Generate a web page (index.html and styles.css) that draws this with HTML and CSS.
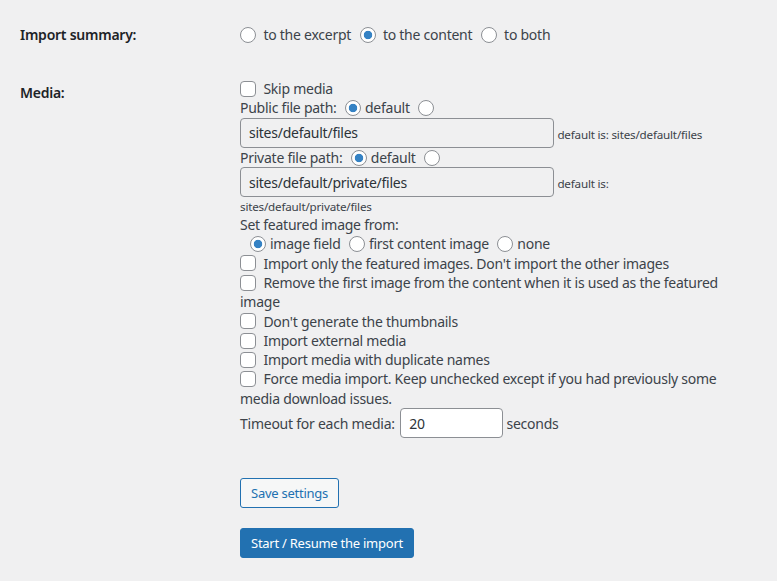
FILE: index.html
```html
<!DOCTYPE html>
<html lang="en">
<head>
<meta charset="utf-8">
<title>Import settings</title>
<link rel="stylesheet" href="styles.css">
</head>
<body>
<div class="wrap">
  <table class="form-table">
    <tr>
      <th>Import summary:</th>
      <td>
        <label class="opt"><input type="radio" name="summary"> to the excerpt</label>
        <label class="opt"><input type="radio" name="summary" checked> to the content</label>
        <label class="opt"><input type="radio" name="summary"> to both</label>
      </td>
    </tr>
    <tr>
      <th>Media:</th>
      <td class="media">
        <div class="line"><label><input type="checkbox"> Skip media</label></div>
        <div class="line">Public file path: <label class="opt"><input type="radio" name="pub" class="first" checked>default</label> <input type="radio" name="pub"></div>
        <div class="pathrow"><input type="text" class="path" value="sites/default/files" readonly> <small class="hint">default is: sites/default/files</small></div>
        <div class="line">Private file path: <label class="opt"><input type="radio" name="priv" class="first" checked>default</label> <input type="radio" name="priv"></div>
        <div class="pathrow"><input type="text" class="path" value="sites/default/private/files" readonly> <small class="hint">default is: sites/default/private/files</small></div>
        <div class="line">Set featured image from:</div>
        <div class="line indent"><label class="opt"><input type="radio" name="feat" checked>image field</label> <label class="opt"><input type="radio" name="feat">first content image</label> <label class="opt"><input type="radio" name="feat">none</label></div>
        <div class="line"><label><input type="checkbox"> Import only the featured images. Don't import the other images</label></div>
        <div class="line"><label><input type="checkbox"> Remove the first image from the content when it is used as the featured image</label></div>
        <div class="line"><label><input type="checkbox"> Don't generate the thumbnails</label></div>
        <div class="line"><label><input type="checkbox"> Import external media</label></div>
        <div class="line"><label><input type="checkbox"> Import media with duplicate names</label></div>
        <div class="line"><label><input type="checkbox"> Force media import. Keep unchecked except if you had previously some media download issues.</label></div>
        <div class="line">Timeout for each media: <input type="text" class="num" value="20"> seconds</div>
      </td>
    </tr>
  </table>
  <div class="actions">
    <button type="button" class="button">Save settings</button>
    <button type="button" class="button button-primary">Start / Resume the import</button>
  </div>
</div>
</body>
</html>
```
FILE: styles.css
```css
html, body {
  margin: 0;
  background: #f0f0f1;
}
body {
  color: #3c434a;
  font-family: "Noto Sans", "Open Sans", sans-serif;
  font-size: 14px;
  line-height: 1.38;
  letter-spacing: -0.25px;
}
.wrap {
  padding: 6px 20px 0 20px;
}
.form-table {
  border-collapse: collapse;
  width: 100%;
}
.form-table th {
  width: 200px;
  padding: 20px 10px 20px 0;
  text-align: left;
  vertical-align: top;
  font-weight: 600;
  color: #1d2327;
  line-height: 1.3;
}
.form-table td {
  padding: 15px 10px;
  vertical-align: middle;
  line-height: 19.3px;
}
.opt {
  margin-right: 5px;
}
input[type=radio],
input[type=checkbox] {
  appearance: none;
  -webkit-appearance: none;
  box-sizing: border-box;
  width: 16px;
  height: 16px;
  margin: -3px 4px 0 0;
  padding: 0;
  border: 1px solid #8c8f94;
  background: #fff;
  vertical-align: middle;
}
input[type=checkbox] {
  border-radius: 4px;
}
input[type=radio] {
  border-radius: 50%;
}
input[type=radio]:checked {
  background: radial-gradient(circle, #3582c4 0, #3582c4 3.8px, #fff 4.6px);
}
input.first {
  margin-left: 5px;
}
.indent {
  padding-left: 10px;
}
.pathrow {
  max-width: 500px;
  line-height: 17px;
}
.path,
.num {
  box-sizing: border-box;
  height: 30px;
  padding: 0 8px;
  border: 1px solid #8c8f94;
  border-radius: 4px;
  font-family: inherit;
  font-size: 14px;
  letter-spacing: -0.25px;
  color: #2c3338;
  vertical-align: baseline;
}
.path {
  width: 314px;
  background: #f0f0f1;
}
.num {
  width: 103px;
  margin-left: 2px;
  background: #fff;
}
.hint {
  font-size: 11.67px;
  letter-spacing: -0.2px;
}
.actions {
  display: flex;
  flex-direction: column;
  align-items: flex-start;
  gap: 20px;
  padding: 25px 0 0 220px;
}
.button {
  box-sizing: border-box;
  min-height: 30px;
  padding: 0 10px;
  border: 1px solid #2271b1;
  border-radius: 3px;
  background: #f6f7f7;
  color: #2271b1;
  font-family: inherit;
  font-size: 13px;
  letter-spacing: -0.25px;
  line-height: 2.15384615;
  cursor: pointer;
}
.button-primary {
  background: #2271b1;
  color: #fff;
}
```
